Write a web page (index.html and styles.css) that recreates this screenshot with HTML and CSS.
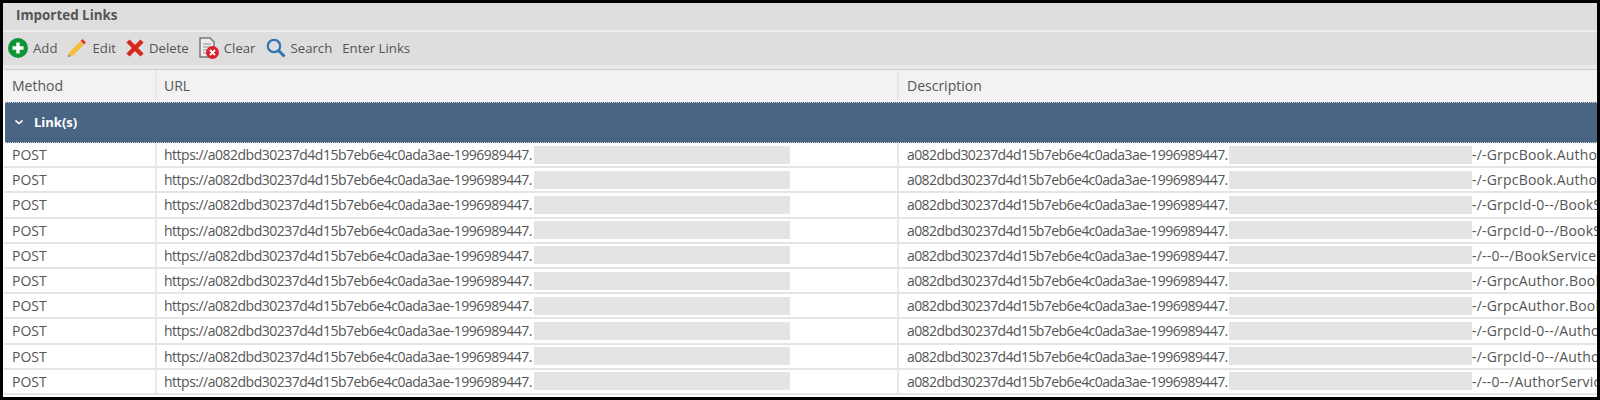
FILE: index.html
```html
<!DOCTYPE html>
<html lang="en">
<head>
    <meta charset="UTF-8">
    <title>Imported Links</title>
    <link rel="stylesheet" href="styles.css">
</head>
<body>
    <div id="panel">
        <h1 class="title">Imported Links</h1>
        <div class="toolbar">
            <button type="button" class="tool">
                <svg width="20" height="20" viewBox="0 0 20 20"><circle cx="10" cy="10" r="10" fill="#0f9438"/><path d="M10 4.500v11M4.500 10h11" stroke="#fff" stroke-width="3.400"/></svg>
                Add
            </button>
            <button type="button" class="tool">
                <svg width="20" height="20" viewBox="0 0 20 20"><path d="M1 19l1.500-5L13 3.500l3.500 3.500L6 17.500z" fill="#f6bd3b"/><path d="M13.500 3l2-2L19 4.500l-2 2z" fill="#e5352b"/><path d="M1 19l.7-2.500 1.800 1.800z" fill="#777"/></svg>
                Edit
            </button>
            <button type="button" class="tool">
                <svg width="18" height="18" viewBox="0 0 18 18"><path d="M2 2l14 14M16 2L2 16" stroke="#d9261c" stroke-width="4.500"/></svg>
                Delete
            </button>
            <button type="button" class="tool">
                <svg width="20" height="22" viewBox="0 0 20 22"><path d="M1 1h10l4 4v15H1z" fill="#eee" stroke="#777" stroke-width="1.500"/><path d="M4 7h8M4 10h8M4 13h5M4 16h4" stroke="#888"/><circle cx="13.500" cy="15.500" r="6.500" fill="#d7232b"/><path d="M11 13l5 5M16 13l-5 5" stroke="#fff" stroke-width="1.800"/></svg>
                Clear
            </button>
            <button type="button" class="tool">
                <svg width="20" height="20" viewBox="0 0 20 20"><circle cx="8" cy="8" r="6.200" fill="none" stroke="#2f75b5" stroke-width="2.200"/><path d="M12.500 12.500l6 6" stroke="#2f75b5" stroke-width="3"/></svg>
                Search
            </button>
            <button type="button" class="tool">Enter Links</button>
        </div>
        <div class="row head">
            <div class="cell">Method</div>
            <div class="cell">URL</div>
            <div class="cell">Description</div>
        </div>
        <div class="group">
            <svg width="8" height="5" viewBox="0 0 8 5"><path d="M.5.5L4 3.500 7.500.5" fill="none" stroke="#fff" stroke-width="1.600"/></svg>
            Link(s)
        </div>
        <div class="row">
            <div class="cell">POST</div>
            <div class="cell"><span class="url">https://a082dbd30237d4d15b7eb6e4c0ada3ae-1996989447.</span><span class="hide"></span></div>
            <div class="cell"><span class="host">a082dbd30237d4d15b7eb6e4c0ada3ae-1996989447.</span><span class="hide long"></span><span class="tail">-/-GrpcBook.AuthorService</span></div>
        </div>
        <div class="row">
            <div class="cell">POST</div>
            <div class="cell"><span class="url">https://a082dbd30237d4d15b7eb6e4c0ada3ae-1996989447.</span><span class="hide"></span></div>
            <div class="cell"><span class="host">a082dbd30237d4d15b7eb6e4c0ada3ae-1996989447.</span><span class="hide long"></span><span class="tail">-/-GrpcBook.AuthorService</span></div>
        </div>
        <div class="row">
            <div class="cell">POST</div>
            <div class="cell"><span class="url">https://a082dbd30237d4d15b7eb6e4c0ada3ae-1996989447.</span><span class="hide"></span></div>
            <div class="cell"><span class="host">a082dbd30237d4d15b7eb6e4c0ada3ae-1996989447.</span><span class="hide long"></span><span class="tail">-/-GrpcId-0--/BookService</span></div>
        </div>
        <div class="row">
            <div class="cell">POST</div>
            <div class="cell"><span class="url">https://a082dbd30237d4d15b7eb6e4c0ada3ae-1996989447.</span><span class="hide"></span></div>
            <div class="cell"><span class="host">a082dbd30237d4d15b7eb6e4c0ada3ae-1996989447.</span><span class="hide long"></span><span class="tail">-/-GrpcId-0--/BookService</span></div>
        </div>
        <div class="row">
            <div class="cell">POST</div>
            <div class="cell"><span class="url">https://a082dbd30237d4d15b7eb6e4c0ada3ae-1996989447.</span><span class="hide"></span></div>
            <div class="cell"><span class="host">a082dbd30237d4d15b7eb6e4c0ada3ae-1996989447.</span><span class="hide long"></span><span class="tail">-/--0--/BookService</span></div>
        </div>
        <div class="row">
            <div class="cell">POST</div>
            <div class="cell"><span class="url">https://a082dbd30237d4d15b7eb6e4c0ada3ae-1996989447.</span><span class="hide"></span></div>
            <div class="cell"><span class="host">a082dbd30237d4d15b7eb6e4c0ada3ae-1996989447.</span><span class="hide long"></span><span class="tail">-/-GrpcAuthor.BookService</span></div>
        </div>
        <div class="row">
            <div class="cell">POST</div>
            <div class="cell"><span class="url">https://a082dbd30237d4d15b7eb6e4c0ada3ae-1996989447.</span><span class="hide"></span></div>
            <div class="cell"><span class="host">a082dbd30237d4d15b7eb6e4c0ada3ae-1996989447.</span><span class="hide long"></span><span class="tail">-/-GrpcAuthor.BookService</span></div>
        </div>
        <div class="row">
            <div class="cell">POST</div>
            <div class="cell"><span class="url">https://a082dbd30237d4d15b7eb6e4c0ada3ae-1996989447.</span><span class="hide"></span></div>
            <div class="cell"><span class="host">a082dbd30237d4d15b7eb6e4c0ada3ae-1996989447.</span><span class="hide long"></span><span class="tail">-/-GrpcId-0--/AuthorService</span></div>
        </div>
        <div class="row">
            <div class="cell">POST</div>
            <div class="cell"><span class="url">https://a082dbd30237d4d15b7eb6e4c0ada3ae-1996989447.</span><span class="hide"></span></div>
            <div class="cell"><span class="host">a082dbd30237d4d15b7eb6e4c0ada3ae-1996989447.</span><span class="hide long"></span><span class="tail">-/-GrpcId-0--/AuthorService</span></div>
        </div>
        <div class="row">
            <div class="cell">POST</div>
            <div class="cell"><span class="url">https://a082dbd30237d4d15b7eb6e4c0ada3ae-1996989447.</span><span class="hide"></span></div>
            <div class="cell"><span class="host">a082dbd30237d4d15b7eb6e4c0ada3ae-1996989447.</span><span class="hide long"></span><span class="tail">-/--0--/AuthorService</span></div>
        </div>
    </div>
</body>
</html>
```

FILE: styles.css
```css
html, body{
    margin: 0; height: 400px; overflow: hidden; background: #000;
}
#panel{
    box-sizing: border-box;
    width: 1594px; height: 394px; margin: 3px;
    overflow: hidden;
    background: #fff;
    font-family: "Open Sans", "Noto Sans", sans-serif;
    font-size: 14px;
    color: #555;
}
.title{
    margin: 0;
    height: 27px; line-height: 25px;
    padding-left: 13px;
    background: #dedede;
    border-bottom: 2px solid #eee;
    font-size: 13.4px; font-weight: 700;
}
.toolbar{
    display: flex; align-items: center;
    box-sizing: content-box;
    height: 32px; padding: 0 0 1px 5px;
    background: #dedede;
    border-bottom: 4px solid #eaeaea;
}
.tool{
    display: flex; align-items: center; gap: 5px;
    margin-right: 10px; padding: 0; border: 0;
    background: none;
    font: inherit; font-size: 13.2px; color: inherit;
}
.row{
    display: grid;
    grid-template-columns: 153px 742px 1fr;
    height: 25.2px;
    box-sizing: border-box;
    margin-left: 1px;
    border-bottom: 2px solid #e4e4e4;
}
.cell{
    display: flex; align-items: center;
    padding-left: 8px;
    border-right: 2px solid #e8e8e8;
    white-space: nowrap; overflow: hidden;
}
.cell:nth-child(2){
    padding-left: 7px;
}
.cell:last-child{
    border-right: 0;
}
.head{
    height: 33px;
    padding-bottom: 2px;
    background: #f2f2f2;
    border-top: 1px solid #ccc;
    border-bottom: 0;
}
.group{
    display: flex; align-items: center; gap: 11px;
    box-sizing: border-box;
    height: 41px; padding: 0 0 1px 10px;
    margin-left: 2px;
    background: #4a6583;
    border-top: 1px dotted #c4ccd6;
    border-bottom: 1px dotted #c4ccd6;
    color: #fff; font-size: 13px; font-weight: 700;
}
.url, .host{
    flex: none;
    letter-spacing: -0.5px;
}
.url{
    width: 370px;
}
.host{
    width: 322px;
    letter-spacing: -0.58px;
}
.tail{
    letter-spacing: 0.2px;
}
.hide{
    flex: none;
    width: 256px; height: 18px;
    background: #e3e4e3;
}
.long{
    width: 243px;
}
```
